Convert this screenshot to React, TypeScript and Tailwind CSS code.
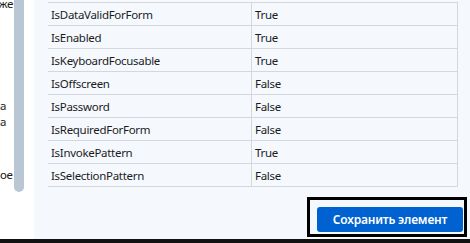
import React from "react";

const rows: [string, string][] = [
  ["IsDataValidForForm", "True"],
  ["IsEnabled", "True"],
  ["IsKeyboardFocusable", "True"],
  ["IsOffscreen", "False"],
  ["IsPassword", "False"],
  ["IsRequiredForForm", "False"],
  ["IsInvokePattern", "True"],
  ["IsSelectionPattern", "False"],
];

export default function App() {
  return (
    <div
      className="w-[470px] h-[243px] flex flex-col overflow-hidden bg-white text-[#1b1b1b]"
      style={{ fontFamily: '"Noto Sans", "Segoe UI", sans-serif' }}
    >
      <div className="flex flex-1 min-h-0">
        {/* left panel */}
        <div className="w-[34px] bg-white flex">
          <div className="w-[14px] overflow-hidden flex flex-col text-[11.5px] leading-[16px] tracking-[-0.3px]">
            <div className="-mt-[4px] pr-[1px] flex justify-end whitespace-nowrap">Похоже</div>
            <div className="mt-[86px] whitespace-nowrap">а</div>
            <div className="whitespace-nowrap">а</div>
            <div className="mt-[37px] whitespace-nowrap">ое</div>
          </div>
          <div className="w-[10px] h-[192px] bg-[#b9c7d5] rounded-b-[5px]" />
        </div>
        {/* right panel */}
        <div className="flex-1 bg-[#f5f9fe] pl-[14px] pr-[12px] pt-[2px] flex flex-col">
          <div className="border-t border-[#d4d8dd]">
            {rows.map(([k, v]) => (
              <div key={k} className="flex h-[23px] border-b border-[#d4d8dd] text-[11.5px] tracking-[-0.3px]">
                <div className="w-[204px] pl-[3px] pt-[1px] leading-[21px] border-r border-[#d4d8dd]">{k}</div>
                <div className="flex-1 pl-[3px] pt-[1px] leading-[21px] border-r border-[#d4d8dd]">{v}</div>
              </div>
            ))}
          </div>
          <div className="flex justify-end mt-[10px] -mr-[9px]">
            <div className="w-[160px] h-[40px] border-[3px] border-black pl-[7px] pt-[7px]">
              <button className="w-[146px] h-[25px] rounded-[3px] bg-[#0062d0] text-white text-[12px] tracking-[-0.2px] font-semibold flex items-center justify-center">
                Сохранить элемент
              </button>
            </div>
          </div>
        </div>
      </div>
      <div className="h-[4px] bg-[#111111]" />
    </div>
  );
}
